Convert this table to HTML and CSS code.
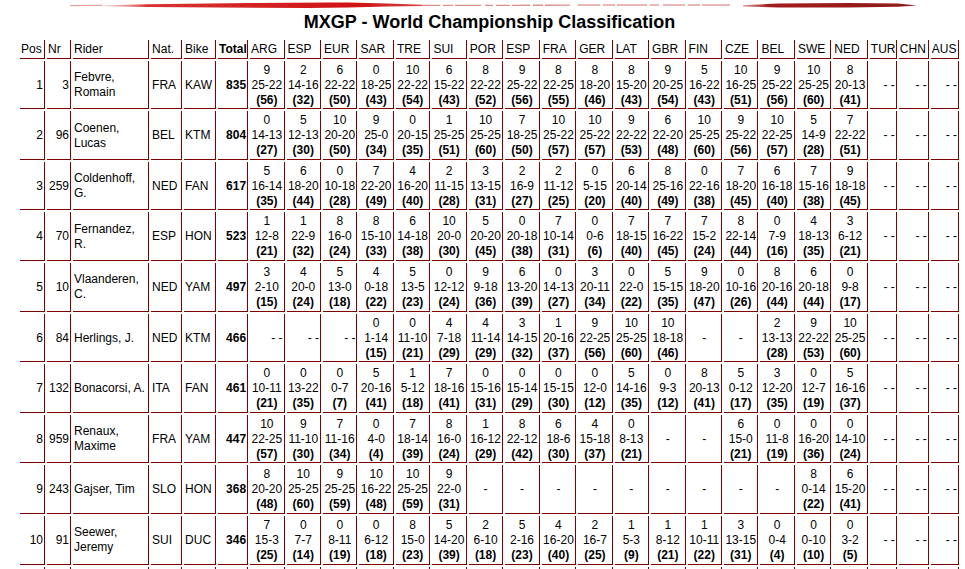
FILE: index.html
```html
<!DOCTYPE html>
<html lang="en">
<head>
<meta charset="utf-8">
<title>MXGP - World Championship Classification</title>
<link rel="stylesheet" href="styles.css">
</head>
<body>
<div class="page">
  <svg class="brush" viewBox="0 0 943 12" width="943" height="12" aria-hidden="true">
    <defs>
      <linearGradient id="fadeL" x1="0" x2="1" y1="0" y2="0">
        <stop offset="0" stop-color="#e8a0a0" stop-opacity="0.3"/>
        <stop offset="0.15" stop-color="#d41c1c" stop-opacity="0.9"/>
        <stop offset="0.8" stop-color="#cf1212"/>
        <stop offset="1" stop-color="#c81818" stop-opacity="0.8"/>
      </linearGradient>
      <linearGradient id="fadeR" x1="0" x2="1" y1="0" y2="0">
        <stop offset="0" stop-color="#b84444" stop-opacity="0.6"/>
        <stop offset="0.15" stop-color="#a31d1d"/>
        <stop offset="1" stop-color="#8e1a1a"/>
      </linearGradient>
    </defs>
    <line x1="52" y1="5.6" x2="84" y2="5.4" stroke="#e6a4a4" stroke-width="1.4"/>
    <path d="M80 5.6 L130 4.2 L230 3.1 L310 2.4 L330 2.6 L370 3.6 L404 4.8 L404 6 L370 6.6 L330 7.4 L290 7.9 L200 7.6 L130 7 L80 6.2 Z" fill="url(#fadeL)"/>
    <line x1="404" y1="5.4" x2="552" y2="5.2" stroke="#d46a6a" stroke-width="1.3" stroke-dasharray="18 3 10 2 26 4 8 3 14 2" opacity="0.75"/>
    <line x1="560" y1="5" x2="712" y2="5" stroke="#d87a7a" stroke-width="1.3" stroke-dasharray="22 3 12 2 30 3 9 4" opacity="0.7"/>
    <path d="M725 5.2 L760 3.6 L830 3 L880 3.6 L899 5.4 L880 6.8 L830 7.6 L760 7.4 L725 6.4 Z" fill="url(#fadeR)"/>
  </svg>
  <h1 class="title">MXGP - World Championship Classification</h1>
  <table class="standings">
    <colgroup>
      <col class="c-pos"><col class="c-nr"><col class="c-rider"><col class="c-nat"><col class="c-bike"><col class="c-total">
      <col class="c-race"><col class="c-race"><col class="c-race"><col class="c-race"><col class="c-race"><col class="c-race">
      <col class="c-race"><col class="c-race"><col class="c-race"><col class="c-race"><col class="c-race"><col class="c-race">
      <col class="c-race"><col class="c-race"><col class="c-race"><col class="c-race"><col class="c-race">
      <col class="c-tur"><col class="c-chn"><col class="c-aus">
    </colgroup>
    <thead>
      <tr>
        <th>Pos</th><th>Nr</th><th>Rider</th><th>Nat.</th><th>Bike</th><th class="total">Total</th>
        <th>ARG</th><th>ESP</th><th>EUR</th><th>SAR</th><th>TRE</th><th>SUI</th><th>POR</th><th>ESP</th><th>FRA</th>
        <th>GER</th><th>LAT</th><th>GBR</th><th>FIN</th><th>CZE</th><th>BEL</th><th>SWE</th><th>NED</th>
        <th>TUR</th><th>CHN</th><th>AUS</th>
      </tr>
    </thead>
    <tbody>
      <tr>
        <td class="num">1</td><td class="num">3</td><td class="rider">Febvre, Romain</td><td>FRA</td><td>KAW</td><td class="tot">835</td>
        <td class="r">9<br>25-22<br><b>(56)</b></td>
        <td class="r">2<br>14-16<br><b>(32)</b></td>
        <td class="r">6<br>22-22<br><b>(50)</b></td>
        <td class="r">0<br>18-25<br><b>(43)</b></td>
        <td class="r">10<br>22-22<br><b>(54)</b></td>
        <td class="r">6<br>15-22<br><b>(43)</b></td>
        <td class="r">8<br>22-22<br><b>(52)</b></td>
        <td class="r">9<br>25-22<br><b>(56)</b></td>
        <td class="r">8<br>22-25<br><b>(55)</b></td>
        <td class="r">8<br>18-20<br><b>(46)</b></td>
        <td class="r">8<br>15-20<br><b>(43)</b></td>
        <td class="r">9<br>20-25<br><b>(54)</b></td>
        <td class="r">5<br>16-22<br><b>(43)</b></td>
        <td class="r">10<br>16-25<br><b>(51)</b></td>
        <td class="r">9<br>25-22<br><b>(56)</b></td>
        <td class="r">10<br>25-25<br><b>(60)</b></td>
        <td class="r">8<br>20-13<br><b>(41)</b></td>
        <td class="na">- -</td><td class="na">- -</td><td class="na">- -</td>
      </tr>
      <tr>
        <td class="num">2</td><td class="num">96</td><td class="rider">Coenen, Lucas</td><td>BEL</td><td>KTM</td><td class="tot">804</td>
        <td class="r">0<br>14-13<br><b>(27)</b></td>
        <td class="r">5<br>12-13<br><b>(30)</b></td>
        <td class="r">10<br>20-20<br><b>(50)</b></td>
        <td class="r">9<br>25-0<br><b>(34)</b></td>
        <td class="r">0<br>20-15<br><b>(35)</b></td>
        <td class="r">1<br>25-25<br><b>(51)</b></td>
        <td class="r">10<br>25-25<br><b>(60)</b></td>
        <td class="r">7<br>18-25<br><b>(50)</b></td>
        <td class="r">10<br>25-22<br><b>(57)</b></td>
        <td class="r">10<br>25-22<br><b>(57)</b></td>
        <td class="r">9<br>22-22<br><b>(53)</b></td>
        <td class="r">6<br>22-20<br><b>(48)</b></td>
        <td class="r">10<br>25-25<br><b>(60)</b></td>
        <td class="r">9<br>25-22<br><b>(56)</b></td>
        <td class="r">10<br>22-25<br><b>(57)</b></td>
        <td class="r">5<br>14-9<br><b>(28)</b></td>
        <td class="r">7<br>22-22<br><b>(51)</b></td>
        <td class="na">- -</td><td class="na">- -</td><td class="na">- -</td>
      </tr>
      <tr>
        <td class="num">3</td><td class="num">259</td><td class="rider">Coldenhoff, G.</td><td>NED</td><td>FAN</td><td class="tot">617</td>
        <td class="r">5<br>16-14<br><b>(35)</b></td>
        <td class="r">6<br>18-20<br><b>(44)</b></td>
        <td class="r">0<br>10-18<br><b>(28)</b></td>
        <td class="r">7<br>22-20<br><b>(49)</b></td>
        <td class="r">4<br>16-20<br><b>(40)</b></td>
        <td class="r">2<br>11-15<br><b>(28)</b></td>
        <td class="r">3<br>13-15<br><b>(31)</b></td>
        <td class="r">2<br>16-9<br><b>(27)</b></td>
        <td class="r">2<br>11-12<br><b>(25)</b></td>
        <td class="r">0<br>5-15<br><b>(20)</b></td>
        <td class="r">6<br>20-14<br><b>(40)</b></td>
        <td class="r">8<br>25-16<br><b>(49)</b></td>
        <td class="r">0<br>22-16<br><b>(38)</b></td>
        <td class="r">7<br>18-20<br><b>(45)</b></td>
        <td class="r">6<br>16-18<br><b>(40)</b></td>
        <td class="r">7<br>15-16<br><b>(38)</b></td>
        <td class="r">9<br>18-18<br><b>(45)</b></td>
        <td class="na">- -</td><td class="na">- -</td><td class="na">- -</td>
      </tr>
      <tr>
        <td class="num">4</td><td class="num">70</td><td class="rider">Fernandez, R.</td><td>ESP</td><td>HON</td><td class="tot">523</td>
        <td class="r">1<br>12-8<br><b>(21)</b></td>
        <td class="r">1<br>22-9<br><b>(32)</b></td>
        <td class="r">8<br>16-0<br><b>(24)</b></td>
        <td class="r">8<br>15-10<br><b>(33)</b></td>
        <td class="r">6<br>14-18<br><b>(38)</b></td>
        <td class="r">10<br>20-0<br><b>(30)</b></td>
        <td class="r">5<br>20-20<br><b>(45)</b></td>
        <td class="r">0<br>20-18<br><b>(38)</b></td>
        <td class="r">7<br>10-14<br><b>(31)</b></td>
        <td class="r">0<br>0-6<br><b>(6)</b></td>
        <td class="r">7<br>18-15<br><b>(40)</b></td>
        <td class="r">7<br>16-22<br><b>(45)</b></td>
        <td class="r">7<br>15-2<br><b>(24)</b></td>
        <td class="r">8<br>22-14<br><b>(44)</b></td>
        <td class="r">0<br>7-9<br><b>(16)</b></td>
        <td class="r">4<br>18-13<br><b>(35)</b></td>
        <td class="r">3<br>6-12<br><b>(21)</b></td>
        <td class="na">- -</td><td class="na">- -</td><td class="na">- -</td>
      </tr>
      <tr>
        <td class="num">5</td><td class="num">10</td><td class="rider">Vlaanderen, C.</td><td>NED</td><td>YAM</td><td class="tot">497</td>
        <td class="r">3<br>2-10<br><b>(15)</b></td>
        <td class="r">4<br>20-0<br><b>(24)</b></td>
        <td class="r">5<br>13-0<br><b>(18)</b></td>
        <td class="r">4<br>0-18<br><b>(22)</b></td>
        <td class="r">5<br>13-5<br><b>(23)</b></td>
        <td class="r">0<br>12-12<br><b>(24)</b></td>
        <td class="r">9<br>9-18<br><b>(36)</b></td>
        <td class="r">6<br>13-20<br><b>(39)</b></td>
        <td class="r">0<br>14-13<br><b>(27)</b></td>
        <td class="r">3<br>20-11<br><b>(34)</b></td>
        <td class="r">0<br>22-0<br><b>(22)</b></td>
        <td class="r">5<br>15-15<br><b>(35)</b></td>
        <td class="r">9<br>18-20<br><b>(47)</b></td>
        <td class="r">0<br>10-16<br><b>(26)</b></td>
        <td class="r">8<br>20-16<br><b>(44)</b></td>
        <td class="r">6<br>20-18<br><b>(44)</b></td>
        <td class="r">0<br>9-8<br><b>(17)</b></td>
        <td class="na">- -</td><td class="na">- -</td><td class="na">- -</td>
      </tr>
      <tr>
        <td class="num">6</td><td class="num">84</td><td class="rider">Herlings, J.</td><td>NED</td><td>KTM</td><td class="tot">466</td>
        <td class="na">- -</td>
        <td class="na">- -</td>
        <td class="na">- -</td>
        <td class="r">0<br>1-14<br><b>(15)</b></td>
        <td class="r">0<br>11-10<br><b>(21)</b></td>
        <td class="r">4<br>7-18<br><b>(29)</b></td>
        <td class="r">4<br>11-14<br><b>(29)</b></td>
        <td class="r">3<br>14-15<br><b>(32)</b></td>
        <td class="r">1<br>20-16<br><b>(37)</b></td>
        <td class="r">9<br>22-25<br><b>(56)</b></td>
        <td class="r">10<br>25-25<br><b>(60)</b></td>
        <td class="r">10<br>18-18<br><b>(46)</b></td>
        <td class="d">-</td>
        <td class="d">-</td>
        <td class="r">2<br>13-13<br><b>(28)</b></td>
        <td class="r">9<br>22-22<br><b>(53)</b></td>
        <td class="r">10<br>25-25<br><b>(60)</b></td>
        <td class="na">- -</td><td class="na">- -</td><td class="na">- -</td>
      </tr>
      <tr>
        <td class="num">7</td><td class="num">132</td><td class="rider">Bonacorsi, A.</td><td>ITA</td><td>FAN</td><td class="tot">461</td>
        <td class="r">0<br>10-11<br><b>(21)</b></td>
        <td class="r">0<br>13-22<br><b>(35)</b></td>
        <td class="r">0<br>0-7<br><b>(7)</b></td>
        <td class="r">5<br>20-16<br><b>(41)</b></td>
        <td class="r">1<br>5-12<br><b>(18)</b></td>
        <td class="r">7<br>18-16<br><b>(41)</b></td>
        <td class="r">0<br>15-16<br><b>(31)</b></td>
        <td class="r">0<br>15-14<br><b>(29)</b></td>
        <td class="r">0<br>15-15<br><b>(30)</b></td>
        <td class="r">0<br>12-0<br><b>(12)</b></td>
        <td class="r">5<br>14-16<br><b>(35)</b></td>
        <td class="r">0<br>9-3<br><b>(12)</b></td>
        <td class="r">8<br>20-13<br><b>(41)</b></td>
        <td class="r">5<br>0-12<br><b>(17)</b></td>
        <td class="r">3<br>12-20<br><b>(35)</b></td>
        <td class="r">0<br>12-7<br><b>(19)</b></td>
        <td class="r">5<br>16-16<br><b>(37)</b></td>
        <td class="na">- -</td><td class="na">- -</td><td class="na">- -</td>
      </tr>
      <tr>
        <td class="num">8</td><td class="num">959</td><td class="rider">Renaux, Maxime</td><td>FRA</td><td>YAM</td><td class="tot">447</td>
        <td class="r">10<br>22-25<br><b>(57)</b></td>
        <td class="r">9<br>11-10<br><b>(30)</b></td>
        <td class="r">7<br>11-16<br><b>(34)</b></td>
        <td class="r">0<br>4-0<br><b>(4)</b></td>
        <td class="r">7<br>18-14<br><b>(39)</b></td>
        <td class="r">8<br>16-0<br><b>(24)</b></td>
        <td class="r">1<br>16-12<br><b>(29)</b></td>
        <td class="r">8<br>22-12<br><b>(42)</b></td>
        <td class="r">6<br>18-6<br><b>(30)</b></td>
        <td class="r">4<br>15-18<br><b>(37)</b></td>
        <td class="r">0<br>8-13<br><b>(21)</b></td>
        <td class="d">-</td>
        <td class="d">-</td>
        <td class="r">6<br>15-0<br><b>(21)</b></td>
        <td class="r">0<br>11-8<br><b>(19)</b></td>
        <td class="r">0<br>16-20<br><b>(36)</b></td>
        <td class="r">0<br>14-10<br><b>(24)</b></td>
        <td class="na">- -</td><td class="na">- -</td><td class="na">- -</td>
      </tr>
      <tr>
        <td class="num">9</td><td class="num">243</td><td class="rider">Gajser, Tim</td><td>SLO</td><td>HON</td><td class="tot">368</td>
        <td class="r">8<br>20-20<br><b>(48)</b></td>
        <td class="r">10<br>25-25<br><b>(60)</b></td>
        <td class="r">9<br>25-25<br><b>(59)</b></td>
        <td class="r">10<br>16-22<br><b>(48)</b></td>
        <td class="r">10<br>25-25<br><b>(59)</b></td>
        <td class="r">9<br>22-0<br><b>(31)</b></td>
        <td class="d">-</td>
        <td class="d">-</td>
        <td class="d">-</td>
        <td class="d">-</td>
        <td class="d">-</td>
        <td class="d">-</td>
        <td class="d">-</td>
        <td class="d">-</td>
        <td class="d">-</td>
        <td class="r">8<br>0-14<br><b>(22)</b></td>
        <td class="r">6<br>15-20<br><b>(41)</b></td>
        <td class="na">- -</td><td class="na">- -</td><td class="na">- -</td>
      </tr>
      <tr>
        <td class="num">10</td><td class="num">91</td><td class="rider">Seewer, Jeremy</td><td>SUI</td><td>DUC</td><td class="tot">346</td>
        <td class="r">7<br>15-3<br><b>(25)</b></td>
        <td class="r">0<br>7-7<br><b>(14)</b></td>
        <td class="r">0<br>8-11<br><b>(19)</b></td>
        <td class="r">0<br>6-12<br><b>(18)</b></td>
        <td class="r">8<br>15-0<br><b>(23)</b></td>
        <td class="r">5<br>14-20<br><b>(39)</b></td>
        <td class="r">2<br>6-10<br><b>(18)</b></td>
        <td class="r">5<br>2-16<br><b>(23)</b></td>
        <td class="r">4<br>16-20<br><b>(40)</b></td>
        <td class="r">2<br>16-7<br><b>(25)</b></td>
        <td class="r">1<br>5-3<br><b>(9)</b></td>
        <td class="r">1<br>8-12<br><b>(21)</b></td>
        <td class="r">1<br>10-11<br><b>(22)</b></td>
        <td class="r">3<br>13-15<br><b>(31)</b></td>
        <td class="r">0<br>0-4<br><b>(4)</b></td>
        <td class="r">0<br>0-10<br><b>(10)</b></td>
        <td class="r">0<br>3-2<br><b>(5)</b></td>
        <td class="na">- -</td><td class="na">- -</td><td class="na">- -</td>
      </tr>
      <tr class="row-more">
        <td></td><td></td><td></td><td></td><td></td><td></td>
        <td></td><td></td><td></td><td></td><td></td><td></td><td></td><td></td><td></td>
        <td></td><td></td><td></td><td></td><td></td><td></td><td></td><td></td>
        <td></td><td></td><td></td>
      </tr>
    </tbody>
  </table>
</div>
</body>
</html>
```

FILE: styles.css
```css
html {
  overflow: hidden;
}

body {
  margin: 0;
  background: #fff;
  color: #000;
  font-family: "Liberation Sans", Arial, sans-serif;
  font-size: 12px;
}

.page {
  margin-left: 18px;
  width: 943px;
}

.brush {
  display: block;
  width: 943px;
  height: 12px;
}

.title {
  margin: 0 0 5px;
  height: 21px;
  font-size: 18px;
  line-height: 21px;
  font-weight: bold;
  text-align: center;
}

.standings {
  width: 943px;
  table-layout: fixed;
  border-collapse: separate;
  border-spacing: 2px;
}

.c-pos { width: 25px; }
.c-nr { width: 24px; }
.c-rider { width: 76px; }
.c-nat { width: 31px; }
.c-bike { width: 32px; }
.c-total { width: 30px; }
.c-race { width: 34.45px; }
.c-tur { width: 27px; }
.c-chn { width: 30px; }
.c-aus { width: 28px; }

.standings th,
.standings td {
  border-right: 1px solid #800000;
  border-bottom: 1px solid #800000;
  padding: 2px 1px 0.6px;
  line-height: 15px;
  vertical-align: middle;
  white-space: nowrap;
  text-align: left;
}

.standings th {
  padding: 1.5px 1px 1.1px;
  font-weight: normal;
}

.standings th.total {
  font-weight: bold;
}

.standings td.num {
  text-align: right;
}

.standings td.tot {
  text-align: right;
  font-weight: bold;
}

.standings td.rider {
  white-space: normal;
}

.standings td.r,
.standings td.d {
  text-align: center;
}

.standings td.na {
  text-align: right;
}

.row-more td {
  height: 45px;
}
```
